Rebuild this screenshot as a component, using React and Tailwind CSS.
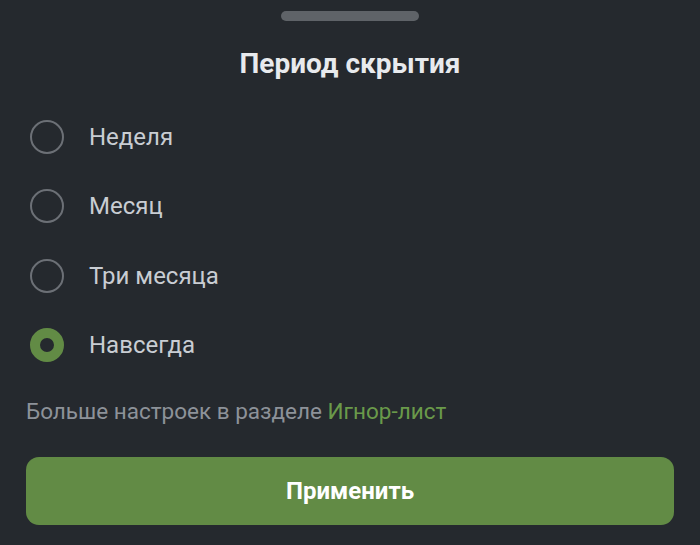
import { useState } from "react";

const options = ["Неделя", "Месяц", "Три месяца", "Навсегда"];

function Radio({ checked }) {
  if (checked) {
    return <span className="block w-[34px] h-[34px] rounded-full border-[10px] border-[#628b45] shrink-0" />;
  }
  return <span className="block w-[34px] h-[34px] rounded-full border-2 border-[#6c7076] shrink-0" />;
}

export default function App() {
  const [selected, setSelected] = useState(3);

  return (
    <div className="w-[700px] h-[545px] bg-[#25292e] overflow-hidden px-[26px] font-['Roboto',sans-serif]">
      <div className="pt-[11px] flex justify-center">
        <div className="w-[138px] h-[10px] rounded-full bg-[#5f6368]" />
      </div>
      <h2 className="mt-[28px] text-center text-[28px] leading-[30px] font-bold text-[#e8eaed]">
        Период скрытия
      </h2>
      <div className="mt-[23px] flex flex-col">
        {options.map((label, i) => (
          <button
            key={label}
            onClick={() => setSelected(i)}
            className="h-[69.5px] flex items-center gap-[25px] pl-[4px] text-left"
          >
            <Radio checked={selected === i} />
            <span className="text-[24px] leading-[30px] text-[#c9cdd3]">{label}</span>
          </button>
        ))}
      </div>
      <p className="mt-[19px] text-[22.5px] leading-[24px] text-[#8d9299]">
        Больше настроек в разделе <span className="text-[#6a9a4a]">Игнор-лист</span>
      </p>
      <button className="mt-[34px] w-full h-[68px] rounded-[13px] bg-[#628b45] text-white text-[24px] font-bold">
        Применить
      </button>
    </div>
  );
}
